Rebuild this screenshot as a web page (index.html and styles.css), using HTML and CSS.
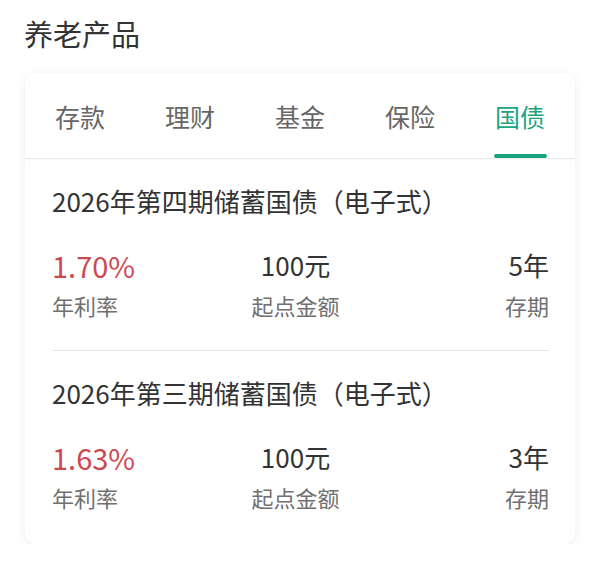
FILE: index.html
```html
<!DOCTYPE html>
<html lang="zh-CN">
<head>
<meta charset="utf-8">
<title>养老产品</title>
<link rel="stylesheet" href="styles.css">
</head>
<body>
<div class="page">
  <h1 class="heading">养老产品</h1>
  <div class="card">
    <div class="tabs">
      <div class="tab"><span class="tab-label">存款</span><span class="tab-bar"></span></div>
      <div class="tab"><span class="tab-label">理财</span><span class="tab-bar"></span></div>
      <div class="tab"><span class="tab-label">基金</span><span class="tab-bar"></span></div>
      <div class="tab"><span class="tab-label">保险</span><span class="tab-bar"></span></div>
      <div class="tab tab-active"><span class="tab-label">国债</span><span class="tab-bar"></span></div>
    </div>
    <div class="list">
      <div class="item">
        <div class="item-title">2026年第四期储蓄国债（电子式）</div>
        <div class="stats">
          <div class="stat stat-left">
            <div class="value value-rate">1.70%</div>
            <div class="label">年利率</div>
          </div>
          <div class="stat stat-mid">
            <div class="value">100元</div>
            <div class="label">起点金额</div>
          </div>
          <div class="stat stat-right">
            <div class="value">5年</div>
            <div class="label">存期</div>
          </div>
        </div>
      </div>
      <div class="item">
        <div class="item-title">2026年第三期储蓄国债（电子式）</div>
        <div class="stats">
          <div class="stat stat-left">
            <div class="value value-rate">1.63%</div>
            <div class="label">年利率</div>
          </div>
          <div class="stat stat-mid">
            <div class="value">100元</div>
            <div class="label">起点金额</div>
          </div>
          <div class="stat stat-right">
            <div class="value">3年</div>
            <div class="label">存期</div>
          </div>
        </div>
      </div>
    </div>
  </div>
</div>
</body>
</html>
```

FILE: styles.css
```css
* {
  box-sizing: border-box;
}

html, body {
  margin: 0;
  padding: 0;
  background: #ffffff;
}

body {
  font-family: "Noto Sans CJK SC", "Noto Sans", sans-serif;
  color: #333333;
}

.page {
  padding: 19px 25px 0 25px;
}

.heading {
  margin: 0 0 26px -1px;
  font-size: 29px;
  line-height: 28px;
  font-weight: 400;
  color: #333333;
}

.card {
  width: 550px;
  background: #ffffff;
  border-radius: 12px;
  box-shadow: 0 2px 12px rgba(0, 0, 0, 0.07);
}

.tabs {
  display: flex;
  border-bottom: 1px solid #e8e8e8;
  box-shadow: 0 1px 2px rgba(0, 0, 0, 0.03);
}

.tab {
  flex: 1;
  display: flex;
  flex-direction: column;
  align-items: center;
  padding-top: 31px;
}

.tab-label {
  font-size: 25px;
  line-height: 25px;
  color: #666666;
}

.tab-bar {
  display: block;
  width: 53px;
  height: 4px;
  margin-top: 25px;
  border-radius: 2px;
  background: transparent;
}

.tab-active .tab-label {
  color: #1ea482;
}

.tab-active .tab-bar {
  background: #15a47e;
}

.list {
  padding: 0 26px 2px 27px;
}

.item {
  padding: 29px 0 34px 0;
}

.item + .item {
  border-top: 1px solid #e6e6e6;
}

.item-title {
  font-size: 26px;
  line-height: 26px;
  color: #333333;
  margin-bottom: 37px;
}

.stats {
  display: flex;
}

.stat {
  flex: 1;
  display: flex;
  flex-direction: column;
}

.stat-left {
  align-items: flex-start;
}

.stat-mid {
  align-items: center;
  padding-right: 10px;
}

.stat-right {
  align-items: flex-end;
}

.value {
  font-size: 26px;
  line-height: 28px;
  color: #333333;
}

.value-rate {
  font-size: 29px;
  color: #cc4950;
}

.label {
  margin-top: 15px;
  font-size: 22px;
  line-height: 22px;
  color: #707070;
}
```
